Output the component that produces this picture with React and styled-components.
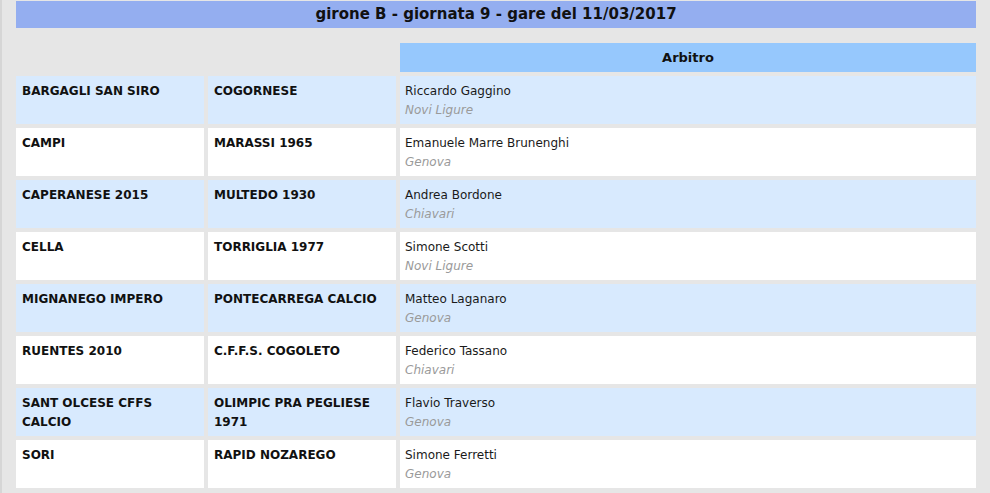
import styled, { createGlobalStyle } from 'styled-components'

const GlobalStyle = createGlobalStyle`
  html, body {
    margin: 0;
    padding: 0;
    background: #e6e6e6;
  }
  body {
    font-family: 'DejaVu Sans', Verdana, sans-serif;
    color: #111;
  }
`

const matches = [
  { home: 'BARGAGLI SAN SIRO', away: 'COGORNESE', ref: 'Riccardo Gaggino', city: 'Novi Ligure' },
  { home: 'CAMPI', away: 'MARASSI 1965', ref: 'Emanuele Marre Brunenghi', city: 'Genova' },
  { home: 'CAPERANESE 2015', away: 'MULTEDO 1930', ref: 'Andrea Bordone', city: 'Chiavari' },
  { home: 'CELLA', away: 'TORRIGLIA 1977', ref: 'Simone Scotti', city: 'Novi Ligure' },
  { home: 'MIGNANEGO IMPERO', away: 'PONTECARREGA CALCIO', ref: 'Matteo Laganaro', city: 'Genova' },
  { home: 'RUENTES 2010', away: 'C.F.F.S. COGOLETO', ref: 'Federico Tassano', city: 'Chiavari' },
  { home: 'SANT OLCESE CFFS CALCIO', away: 'OLIMPIC PRA PEGLIESE 1971', ref: 'Flavio Traverso', city: 'Genova' },
  { home: 'SORI', away: 'RAPID NOZAREGO', ref: 'Simone Ferretti', city: 'Genova' },
]

const App = () => {
  return (
    <>
      <GlobalStyle />
      <Page>
        <Title>girone B - giornata 9 - gare del 11/03/2017</Title>
        <Grid>
          <Blank />
          <Blank />
          <HeadCell>Arbitro</HeadCell>
          {matches.map((m, i) => (
            <Row key={m.home} $alt={i % 2 === 0}>
              <Team>{m.home}</Team>
              <Team>{m.away}</Team>
              <RefCell>
                <RefName>{m.ref}</RefName>
                <City>{m.city}</City>
              </RefCell>
            </Row>
          ))}
        </Grid>
      </Page>
    </>
  )
}

const Page = styled.div`
  width: 990px;
  min-height: 493px;
  box-sizing: border-box;
  padding: 1px 14px 0 14px;
  border-left: 2px solid #d6d6d6;
`

const Title = styled.div`
  width: 960px;
  height: 27px;
  background: #94aef0;
  text-align: center;
  font-weight: bold;
  font-size: 15px;
  line-height: 26px;
  color: #111;
`

const Grid = styled.div`
  display: grid;
  grid-template-columns: 188px 188px 576px;
  gap: 4px;
  width: 960px;
  margin-top: 15px;
`

const Blank = styled.div`
  height: 29px;
`

const HeadCell = styled.div`
  height: 29px;
  background: #96c8fd;
  text-align: center;
  font-weight: bold;
  font-size: 13px;
  line-height: 30px;
  color: #111;
`

const Row = styled.div`
  display: contents;
  & > div {
    background: ${(p) => (p.$alt ? '#d8eafe' : '#ffffff')};
  }
`

const Team = styled.div`
  min-height: 38px;
  padding: 6px 6px 4px;
  font-size: 12px;
  font-weight: bold;
  line-height: 19px;
  color: #111;
`

const RefCell = styled.div`
  padding: 6px 5px 4px;
  font-size: 12px;
  line-height: 19px;
`

const RefName = styled.div`
  color: #1a1a1a;
`

const City = styled.div`
  color: #9a9a9a;
  font-style: italic;
`

export default App
